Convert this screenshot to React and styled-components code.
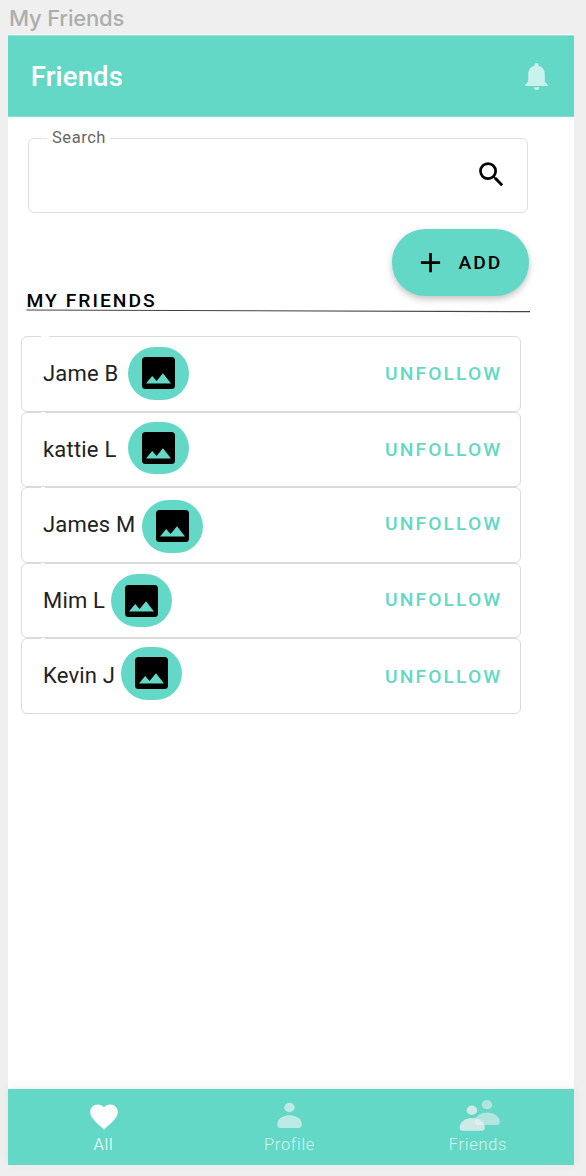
import React from "react";
import styled, { createGlobalStyle } from "styled-components";

const GlobalStyle = createGlobalStyle`
  * { box-sizing: border-box; }
  body { margin: 0; background: #efefef; font-family: Roboto, "Liberation Sans", sans-serif; }
  button { font-family: inherit; border: 0; padding: 0; background: none; }
`;

const Canvas = styled.div`
  width: 586px;
  height: 1176px;
  padding: 0 12px 11px 8px;
  display: flex;
  flex-direction: column;
  overflow: hidden;
`;

const FrameTitle = styled.div`
  height: 34px;
  padding: 4px 0 0 1px;
  font: 500 22px/28px Inter, sans-serif;
  letter-spacing: -0.2px;
  color: #adadad;
`;

const Screen = styled.main`
  flex: 1;
  min-height: 0;
  display: flex;
  flex-direction: column;
  background: #fff;
  padding-top: 1px;
`;

const TopBar = styled.header`
  height: 82px;
  flex: none;
  display: flex;
  align-items: center;
  justify-content: space-between;
  padding: 0 22px 0 22.8px;
  background: #64d8c6;
  border-top: 1px solid #94e5d9;
  border-bottom: 1px solid #80dfd0;
`;

const Heading = styled.h1`
  margin: 0;
  font-size: 27.5px;
  line-height: 33px;
  font-weight: 500;
  letter-spacing: 0.15px;
  color: #fff;
`;

const BellIcon = styled.svg`
  width: 31px;
  height: 33px;
  fill: #c9f2ec;
`;

const Content = styled.div`
  flex: 1;
  display: flex;
  flex-direction: column;
  padding: 10px 45px 0 13px;
`;

const SearchField = styled.fieldset`
  width: 500px;
  height: 86px;
  margin: 0 0 0 7px;
  padding: 0 19px 0 18px;
  border: 1px solid #dfdfdf;
  border-radius: 6px;
  display: flex;
  justify-content: flex-end;
`;

const SearchLabel = styled.legend`
  padding: 0 4px 0 5px;
  font-size: 16.5px;
  line-height: 22px;
  letter-spacing: 0.55px;
  color: #666;
`;

const SearchIcon = styled.svg`
  width: 33px;
  height: 33px;
  margin-top: 9px;
`;

const AddButton = styled.button`
  align-self: flex-end;
  display: flex;
  align-items: center;
  width: 137px;
  height: 66.5px;
  margin: 16px 0 0;
  padding-left: 22px;
  gap: 11.5px;
  border-radius: 33.25px;
  background: #64d8c6;
  box-shadow: 0 3px 7px rgba(0, 0, 0, 0.24);
  color: #000;
  font-size: 19.25px;
  font-weight: 500;
  letter-spacing: 2px;
`;

const SectionTitle = styled.h2`
  margin: -5.5px 0 0 5.5px;
  height: 22px;
  font-size: 19.25px;
  line-height: 22px;
  font-weight: 500;
  letter-spacing: 2.02px;
  color: #000;
`;

const Rule = styled.svg`
  display: block;
  width: 504px;
  height: 4px;
  margin: -3px 0 0 5px;
`;

const FriendList = styled.ul`
  list-style: none;
  margin: 23px 0 0;
  padding: 0;
  width: 500.4px;
`;

const FriendRow = styled.li`
  position: relative;
  height: 75.6px;
  display: flex;
  align-items: flex-start;
  padding: 0 19px 0 21px;
  border: 1px solid #dadada;
  border-radius: 6px;

  &::before {
    content: "";
    position: absolute;
    top: -1px;
    left: 19px;
    width: ${({ $first }) => ($first ? 8 : 4)}px;
    height: 1px;
    background: #fff;
  }
`;

const FriendName = styled.span`
  margin-top: 24px;
  font-size: 22px;
  line-height: 26px;
  letter-spacing: 0.2px;
  color: #222;
  width: ${({ $width }) => $width}px;
  white-space: nowrap;
`;

const Avatar = styled.span`
  width: 61px;
  height: 52.5px;
  margin-top: ${({ $top }) => $top}px;
  border-radius: 27px;
  background: #64d8c6;
  display: flex;
  align-items: center;
  justify-content: center;
`;

const PictureIcon = styled.svg`
  width: 33px;
  height: 32px;
`;

const Unfollow = styled.button`
  margin: ${({ $top }) => $top}px -1px 0 auto;
  font-size: 19.25px;
  line-height: 22px;
  font-weight: 500;
  letter-spacing: 2.1px;
  color: #64d8c6;
`;

const BottomNav = styled.nav`
  flex: none;
  height: 76px;
  display: grid;
  grid-template-columns: 191px 181px 194px;
  background: #64d8c6;
  box-shadow: 0 -2px 10px rgba(0, 0, 0, 0.06);
`;

const NavItem = styled.button`
  display: flex;
  flex-direction: column;
  align-items: center;
  padding-top: 10px;
  font-size: 16.5px;
  line-height: 21px;
  font-weight: 300;
  letter-spacing: 0.7px;
  color: ${({ $active }) => ($active ? "#fff" : "#d5f5f0")};

  &:last-child {
    padding-left: 2px;
  }
`;

const NavIcon = styled.svg`
  width: 44px;
  height: 35px;
  overflow: visible;
`;

const friends = [
  { name: "Jame B", width: 85, avatarTop: 10.1, actionTop: 26 },
  { name: "kattie L", width: 85, avatarTop: 9.4, actionTop: 26 },
  { name: "James M", width: 98.7, avatarTop: 12, actionTop: 25 },
  { name: "Mim L", width: 68.3, avatarTop: 10.5, actionTop: 25 },
  { name: "Kevin J", width: 78.2, avatarTop: 7.8, actionTop: 26.5 },
];

function Picture() {
  return (
    <PictureIcon viewBox="0 0 33 32">
      <rect width="33" height="32" rx="3.5" fill="#000" />
      <path d="M4 26.5 10.2 19l4.4 5.1L21 16.2l8 10.3z" fill="#64d8c6" />
    </PictureIcon>
  );
}

export default function App() {
  return (
    <>
      <GlobalStyle />
      <Canvas>
        <FrameTitle>My Friends</FrameTitle>
        <Screen>
          <TopBar>
            <Heading>Friends</Heading>
            <BellIcon viewBox="0 0 31 33">
              <path d="M15.5 3c1.2 0 2 .8 2 2v.8c4 1 6.3 4.3 6.3 8.3v7.6l3 3v1.2H4.2v-1.2l3-3v-7.6c0-4 2.3-7.3 6.3-8.3V5c0-1.200.8-2 2-2z" />
              <path d="M12.7 27.300h5.600c0 1.500-1.200 2.700-2.800 2.700s-2.800-1.200-2.800-2.700z" />
            </BellIcon>
          </TopBar>
          <Content>
            <SearchField>
              <SearchLabel>Search</SearchLabel>
              <SearchIcon viewBox="0 0 24 24">
                <path d="M15.5 14h-.79l-.28-.27A6.471 6.471 0 0 0 16 9.500 6.500 6.500 0 1 0 9.500 16c1.610 0 3.090-.59 4.230-1.570l.27.28v.79l5 4.990L20.490 19l-4.990-5zm-6 0C7.010 14 5 11.990 5 9.500S7.010 5 9.500 5 14 7.010 14 9.500 11.990 14 9.500 14z" />
              </SearchIcon>
            </SearchField>
            <AddButton>
              <svg width="33" height="33" viewBox="0 0 24 24">
                <path d="M19 13h-6v6h-2v-6H5v-2h6V5h2v6h6v2z" />
              </svg>
              ADD
            </AddButton>
            <SectionTitle>MY FRIENDS</SectionTitle>
            <Rule viewBox="0 0 504 4">
              <line x1="0.500" y1="1" x2="504" y2="2.700" stroke="#444" strokeWidth="1.200" />
            </Rule>
            <FriendList>
              {friends.map((f, i) => (
                <FriendRow key={f.name} $first={i === 0}>
                  <FriendName $width={f.width}>{f.name}</FriendName>
                  <Avatar $top={f.avatarTop}>
                    <Picture />
                  </Avatar>
                  <Unfollow $top={f.actionTop}>UNFOLLOW</Unfollow>
                </FriendRow>
              ))}
            </FriendList>
          </Content>
          <BottomNav>
            <NavItem $active>
              <NavIcon viewBox="0 0 44 35">
                <path
                  d="M22 30.500 19.900 28.600C12.700 22 8.200 17.900 8.200 12.900 8.200 8.700 11.500 5.400 15.800 5.400c2.400 0 4.700 1.100 6.200 2.900 1.500-1.800 3.800-2.900 6.200-2.900 4.300 0 7.600 3.300 7.600 7.500 0 5-4.500 9.100-11.700 15.700z"
                  fill="#fff"
                />
              </NavIcon>
              All
            </NavItem>
            <NavItem>
              <NavIcon viewBox="0 0 44 35" fill="#bcebe5">
                <ellipse cx="21.500" cy="8.500" rx="5.200" ry="4.700" />
                <path d="M9.200 25.500C9.200 19.800 15 16.300 21.500 16.300S33.800 19.800 33.800 25.500c0 2.300-1 3.500-3 3.500H12.200c-2 0-3-1.200-3-3.500z" />
              </NavIcon>
              Profile
            </NavItem>
            <NavItem>
              <NavIcon viewBox="0 0 44 35">
                <g fill="#f6eff2" fillOpacity="0.530">
                  <ellipse cx="31" cy="5.700" rx="5.300" ry="4.600" />
                  <path d="M18.800 22.700c0-5.200 5.600-9.300 12.400-9.300s12.600 4.100 12.600 9.300c0 2.300-.8 3.300-2.900 3.300H21.700c-2 0-2.900-1-2.900-3.300z" />
                </g>
                <g fill="#f6eff2" fillOpacity="0.730">
                  <ellipse cx="15.900" cy="11.200" rx="5.300" ry="4.700" />
                  <path d="M3.700 28.500C3.700 23.200 9.100 19 16.200 19s12.600 4.200 12.600 9.500c0 2.200-.9 3.200-2.900 3.200H6.600c-2 0-2.900-1-2.900-3.200z" />
                </g>
              </NavIcon>
              Friends
            </NavItem>
          </BottomNav>
        </Screen>
      </Canvas>
    </>
  );
}
